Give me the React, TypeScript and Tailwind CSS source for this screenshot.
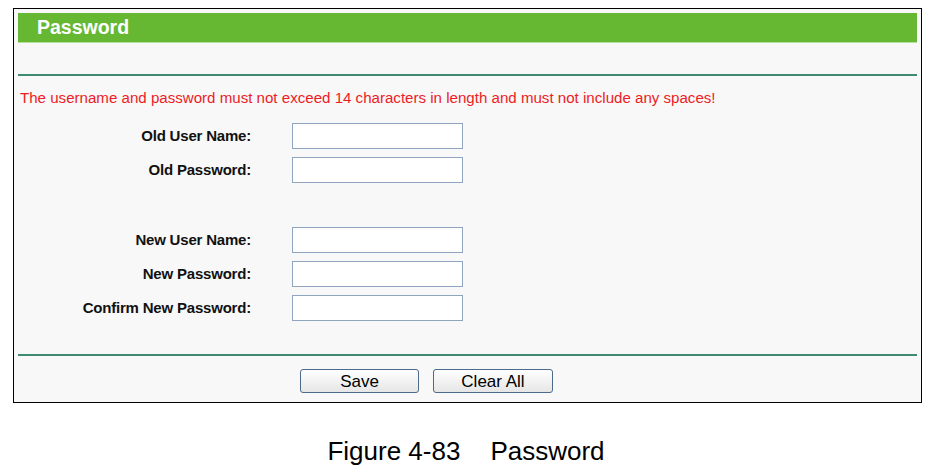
import React from "react";

const font = { fontFamily: '"Liberation Sans", Arial, sans-serif' };

function Row({ label }: { label: string }) {
  return (
    <div className="flex items-center h-[34px]">
      <div className="w-[233px] text-right font-bold text-[15px] text-[#111] tracking-[-0.2px]">{label}</div>
      <div className="ml-[41px] w-[171px] h-[26px] bg-white border border-[#8ea4bf]" />
    </div>
  );
}

export default function App() {
  return (
    <div className="w-[942px] h-[470px] bg-white relative overflow-hidden" style={font}>
      <div className="ml-[13px] mt-[8px] w-[909px] h-[395px] border border-black bg-[#f8f8f8] px-[4px] pt-[4px] flex flex-col">
        <div className="h-[29px] bg-[#66b832] flex items-center pl-[19px]">
          <span className="text-white font-bold text-[19.5px] leading-none">Password</span>
        </div>
        <div className="h-[1px] bg-[#b7df9c]" />
        <div className="h-[31px]" />
        <div className="h-[2px] bg-[#3f8b72]" />
        <div className="h-[12px]" />
        <div className="h-[20px] flex items-center pl-[2px] text-[15.1px] text-[#ee1c25] whitespace-nowrap">
          The username and password must not exceed 14 characters in length and must not include any spaces!
        </div>
        <div className="h-[11px]" />
        <Row label="Old User Name:" />
        <Row label="Old Password:" />
        <div className="h-[36px]" />
        <Row label="New User Name:" />
        <Row label="New Password:" />
        <Row label="Confirm New Password:" />
        <div className="h-[29px]" />
        <div className="h-[2px] bg-[#3f8b72]" />
        <div className="h-[13px]" />
        <div className="flex pl-[282px] gap-[14px]">
          <button className="w-[119px] h-[24px] rounded-[3px] border border-[#4c6a8c] bg-gradient-to-b from-white to-[#e6e6e6] text-[17px] leading-none text-black">Save</button>
          <button className="w-[120px] h-[24px] rounded-[3px] border border-[#4c6a8c] bg-gradient-to-b from-white to-[#e6e6e6] text-[17px] leading-none text-black">Clear All</button>
        </div>
      </div>
      <div className="absolute left-0 top-[436px] w-full flex justify-center text-[26px] leading-[30px] text-black">
        <span className="ml-[-10px]">Figure 4-83</span>
        <span className="ml-[30px]">Password</span>
      </div>
    </div>
  );
}
